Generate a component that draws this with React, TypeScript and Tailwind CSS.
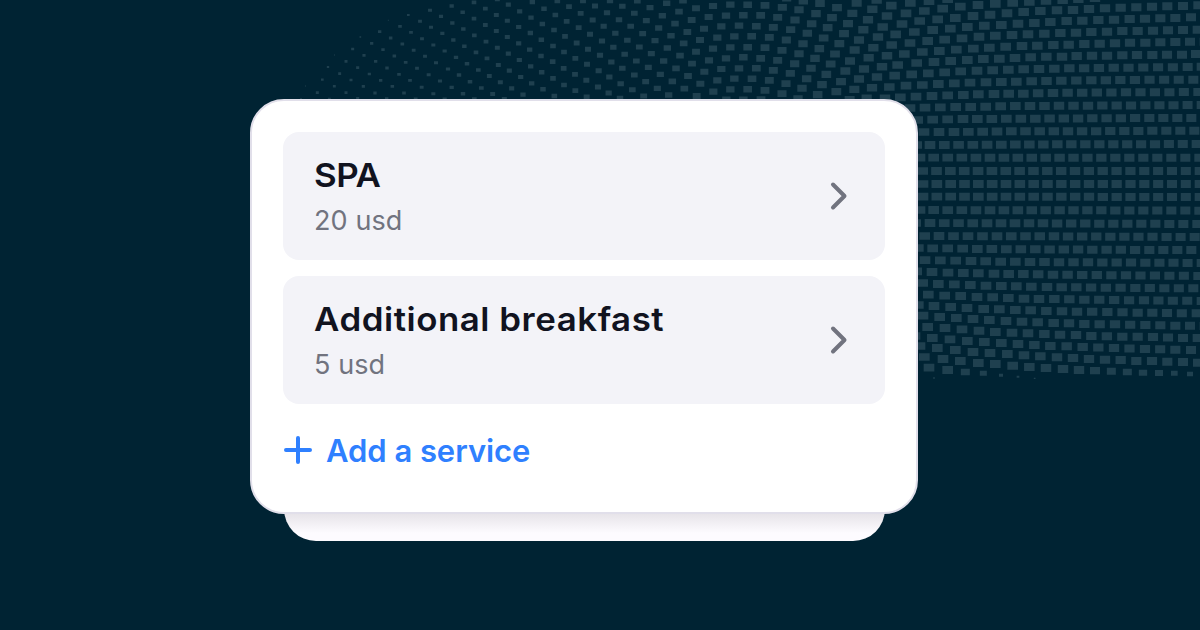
type Service = { title: string; price: string; spacing: string };

const services: Service[] = [
  { title: "SPA", price: "20 usd", spacing: "tracking-[-0.4px]" },
  { title: "Additional breakfast", price: "5 usd", spacing: "tracking-[0.5px]" },
];

// Mesh strands on a 3600x1890 canvas. Every strand is a list of x,y knots;
// "x,y,n" puts n evenly spaced cells between the previous knot and this one,
// "x,y,n,w,h" also fixes the cell size.
const mesh = [
  {
    offset: 870,
    strands: [
      "46,258,1,2,4",
      "82,278,1,9,8",
      "33,297,1,6,5",
      "97,239,1,8,7 118,297",
      "114,201,1,7,6 133,259",
      "133,165,1,2,5 149,221 168,278",
      "168,184 183,240 203,295",
      "188,147 203,203 220,259",
      "211,111,1,5,4 222,166 238,222 255,279",
      "245,130 257,184 272,241 290,296",
      "269,95 279,149 291,204 307,259",
      "295,61,1,3,3 302,114 313,168 327,223 342,279",
      "330,79 337,132 347,187 360,241 377,297",
      "355,45,1,8,6 363,97 371,151 381,205 395,262",
      "390,64 396,116 405,169 416,224 430,281",
      "420,31 423,82 430,135 438,188 450,243 464,297",
      "453,49 457,100 464,153 474,207 485,262",
    ],
  },
  {
    offset: 1350,
    strands: [
      "5,18 7,69 10,120 18,172 27,225 39,281",
      "38,37 40,87 43,139 51,191 60,245 73,297",
      "72,7 72,56 73,106 78,157 85,210 94,264",
      "106,26 106,75 108,125 111,175 118,228 128,282",
      "142,-2 139,45 139,93 142,143 145,195 151,247 163,297",
      "175,14 172,62 172,111 175,161 178,212 185,265",
      "209,34 206,81 206,130 208,180 212,231 219,284",
      "247,6 243,53 241,99 239,149 242,199 245,250",
      "282,26 277,72 274,119 273,168 275,217 279,268",
      "322,3 316,45 312,90 309,138 308,185 309,235 313,288",
      "357,20 350,64 345,109 342,156 341,205 342,255",
      "399,2 392,40 386,83 380,129 376,175 375,223 376,272",
      "435,18 428,60 420,103 414,148 411,193 409,241 410,291",
    ],
  },
  {
    offset: 1800,
    strands: [
      "30,2 21,38 11,79 6,123 0,166 -4,212 -6,261",
      "67,19 57,59 46,100 40,142 34,186 28,231 26,279",
      "112,3 103,40 92,79 82,121 74,163 67,205 62,251 60,295",
      "150,23 139,62 128,101 118,141 109,183 103,225 97,269",
      "200,10 187,47 176,84 165,122 154,161 145,202 137,245 131,288",
      "249,2 237,35 225,71 213,107 202,144 191,183 181,223 172,265",
      "288,25 275,60 262,96 251,130 240,167 228,205 217,244 206,285",
      "339,18 326,51 312,86 300,120 288,155 276,191 264,228 253,266",
      "391,14 378,47 364,79 352,113 339,146 327,181 313,215 301,251 290,288",
      "443,14 430,46 417,77 403,109 391,142 378,175 364,207 352,241 340,275",
      "495,16 482,46 469,79 455,109 443,142 430,172 417,205 403,236 391,268 379,299",
      "547,22 533,52 520,82 508,112 495,143 482,175 469,205 456,236 443,268 430,299",
      "560,-6 610,3 597,29 585,60 572,89 559,120 546,151 533,181 520,211 508,241 495,271 483,299",
      "660,10 648,41 635,71 622,100 609,131 597,161 584,191 571,220 558,251 546,281",
      "711,23 696,53 683,83 671,114 658,146 645,175 633,205 620,236 606,265 594,296",
      "770,9 757,40 744,71 732,101 718,131 705,162 692,192 679,223 666,254 653,284",
      "830,0 817,28 804,59 790,89 777,120 764,150 750,183 736,213 723,245 709,275",
      "874,17 861,48 848,81 834,111 820,143 806,173 792,207 777,237 763,268 749,299",
      "887,103 875,135 861,167 846,200 831,231 816,263 800,295",
      "893,195 884,227 868,261 855,295",
    ],
  },
  {
    offset: 2700,
    strands: [
      "488,0 535,-3,1 585,-6,1",
      "31,9 87,3 143,-3",
      "18,40 73,33 128,26 181,20 234,15 286,11 338,8 388,5 438,2",
      "6,72 59,63 113,58 166,54 219,48 270,44 321,40 371,36 421,33 471,31 519,30 567,27 615,25 662,23 709,22 756,20 802,19 849,18 895,16",
      "43,96 98,90 151,86 202,81 253,77 304,75 354,71 403,69 451,66 500,63 547,62 595,60 642,59 689,57 735,56 781,55 826,54 873,52",
      "30,129 83,123 134,119 186,115 237,110 286,107 336,105 384,103 433,101 481,99 528,98 574,96 621,95 667,93 713,93 759,92 804,91 849,90 893,89",
      "13,162 67,156 118,153 169,149 220,146 268,143 317,140 366,138 412,137 460,135 506,134 553,132 599,131 645,130 690,128 736,128 781,127 826,126 870,125 914,125",
      "50,189 102,186 152,183 202,180 250,177 298,176 345,174 392,172 439,170 486,170 530,168 576,167 621,167 667,166 711,165 757,165 801,164 846,164 888,162",
      "35,223 85,220 134,217 182,214 231,212 278,211 325,209 371,208 417,207 463,206 508,205 863,201,8 905,200",
      "18,257 67,255 115,252 163,250 210,248 258,247 304,246 349,245 395,244 484,242,2 574,241,2 661,240,2 880,239,5",
      "1,292 48,290 96,288 143,286 190,285 235,283 282,282 326,281 370,281 459,279,2 678,277,5 895,276,5",
      "30,324 75,323 121,322 167,321 212,321 257,320 302,319 346,318 390,318 564,317,4 736,316,4 905,315,4",
      "53,360 98,359 143,358 189,357 232,357 406,356,4 577,355,4 748,354,4 874,354,3",
      "72,396 117,396 162,396 334,394,4 504,394,4 673,393,4 883,392,5",
      "50,435 90,435 133,435 304,434,4 472,433,4 640,433,4 890,432,6",
      "60,473 101,473 270,473,4 437,473,4 604,473,4 898,473,7",
      "68,513 899,513,20",
      "69,552 899,552,20",
      "69,590 899,591,20",
      "60,630 101,630 270,631,4 437,631,4 604,631,4 898,632,7",
      "47,669 90,669 261,670,4 429,670,4 598,671,4 892,672,7",
      "74,708 117,708 291,709,4 462,709,4 631,710,4 884,711,6",
      "55,744 98,745 143,745 188,746 232,747 406,748,4 577,749,4 748,750,4 874,750,3",
      "75,780 121,781 167,782 213,783 257,784 302,785 390,786,2 564,787,4 736,788,4 905,789,4",
      "50,814 96,816 144,818 190,819 235,820 282,821 326,822 370,822 459,824,2 678,826,5 895,828,5",
      "68,849 115,852 163,853 211,855 258,857 304,858 349,859 394,860 441,861 529,862,2 706,864,4 880,865,4",
      "85,884 134,887 182,888 231,891 278,892 325,894 372,896 417,897 463,897 553,899,2 732,901,4 905,903,4",
      "55,915 102,918 152,921 201,924 251,927 298,928 346,930 392,931 439,933 486,934 531,935 622,936,2 713,938,2 801,939,2 890,940,2",
      "69,947 119,951 169,954 219,957 268,960 318,963 366,965 413,967 461,969 507,970 553,972 645,973,2 736,975,2 826,977,2 914,978,2",
      "83,981 135,984 186,988 237,992 286,996 336,998 384,1000 433,1002 480,1004 528,1005 574,1008 667,1010,2 759,1011,2 849,1014,2 893,1014",
      "45,1008 97,1014 150,1018 202,1023 253,1026 304,1029 354,1032 403,1035 451,1038 500,1039 548,1041 642,1044,2 735,1047,2 826,1049,2 873,1050",
      "60,1038 112,1044 166,1050 219,1056 270,1059 322,1062 372,1066 421,1069 471,1072 519,1074 567,1077 615,1079 662,1080 709,1083 756,1083 802,1085 849,1086 894,1088",
      "73,1071 129,1077 181,1083 235,1089 286,1092 338,1097 388,1101 438,1104 489,1107 537,1110 585,1112,1,30,22 634,1114,1,27,21 682,1116,1,27,20 729,1118,1,25,18 777,1119,1,24,18 823,1120,1,20,15 870,1122,1,18,13",
      "87,1103 143,1110 196,1116,1,27,19 250,1120,1,21,15 303,1126,1,12,9 354,1130,1,8,6 404,1135,1,5,4",
      "102,1134,1,5,5",
    ],
  },
];

// [x, cell width, cell height]
const cellSizes = [
  [900, 8, 7],
  [1050, 9, 8],
  [1300, 12, 9],
  [1500, 15, 12],
  [1770, 18, 15],
  [1900, 20, 15],
  [2100, 24, 18],
  [2400, 28, 21],
  [2700, 32, 23],
  [3000, 32, 24],
  [3600, 30, 24],
];

function sizeAt(x: number) {
  const i = Math.max(1, cellSizes.findIndex(([stop]) => stop >= x));
  const [x0, w0, h0] = cellSizes[i - 1];
  const [x1, w1, h1] = cellSizes[i];
  const t = Math.max(0, (x - x0) / (x1 - x0));
  return [w0 + (w1 - w0) * t, h0 + (h1 - h0) * t];
}

function strandPath(strand: string, offset: number) {
  let d = "";
  let prev: number[] | null = null;
  for (const knot of strand.split(" ")) {
    const [kx, y, n = 1, kw, kh] = knot.split(",").map(Number);
    const x = kx + offset;
    const [px, py] = prev ?? [x, y];
    for (let i = 1; i <= n; i++) {
      const cx = px + ((x - px) * i) / n;
      const cy = py + ((y - py) * i) / n;
      const [w, h] = kw ? [kw, kh] : sizeAt(Math.min(cx, 3600));
      d += `M${cx - w / 2} ${cy - h / 2}h${w}v${h}h${-w}z`;
    }
    prev = [x, y];
  }
  return d;
}

function MeshBackground() {
  return (
    <svg className="absolute inset-0 h-full w-full" viewBox="0 0 3600 1890" fill="#1f404f">
      {mesh.map(({ offset, strands }) => (
        <path key={offset} d={strands.map((s) => strandPath(s, offset)).join("")} />
      ))}
    </svg>
  );
}

function ServiceRow({ title, price, spacing }: Service) {
  return (
    <div className="flex h-32 items-center justify-between rounded-2xl bg-[#f3f3f8] pt-[3px] pl-[31px] pr-[36px]">
      <div>
        <h3 className={`origin-left scale-x-[1.057] text-[33px] leading-10 font-semibold text-[#11131f] ${spacing}`}>{title}</h3>
        <p className="mt-[6px] -mb-px text-[27px] leading-10 tracking-[0.1px] text-[#71737f]">{price}</p>
      </div>
      <svg className="-mt-[3px] h-8 w-5" viewBox="0 0 20 32" fill="none" stroke="#71737f" strokeWidth="4" strokeLinecap="round" strokeLinejoin="round">
        <path d="M4 4.5 15.5 16 4 27.5" />
      </svg>
    </div>
  );
}

export default function App() {
  return (
    <div className="relative h-[630px] w-[1200px] overflow-hidden bg-[#002333] pt-[99px] pl-[250px] font-['Inter',sans-serif]">
      <MeshBackground />

      <div className="relative w-[668px]">
        <div className="absolute inset-x-[33.5px] -bottom-[26.5px] h-20 rounded-b-[32px] bg-linear-to-b from-[#e6e3e8] from-65% to-[#fdfbff] to-90%" />
        <main className="relative flex h-[415px] flex-col gap-4 rounded-[34px] border-2 border-[#e1dfea] bg-white px-[31px] pt-[31px]">
          {services.map((service) => (
            <ServiceRow key={service.title} {...service} />
          ))}
          <button className="mt-[10px] flex items-center gap-[13px] text-[#2f80ff]">
            <svg className="h-[30px] w-[30px]" viewBox="0 0 30 30" fill="none" stroke="currentColor" strokeWidth="4" strokeLinecap="round">
              <path d="M15 3v24M3 15h24" />
            </svg>
            <span className="mt-px -mb-px text-[31px] leading-10 font-semibold tracking-[-0.05px]">Add a service</span>
          </button>
        </main>
      </div>
    </div>
  );
}
